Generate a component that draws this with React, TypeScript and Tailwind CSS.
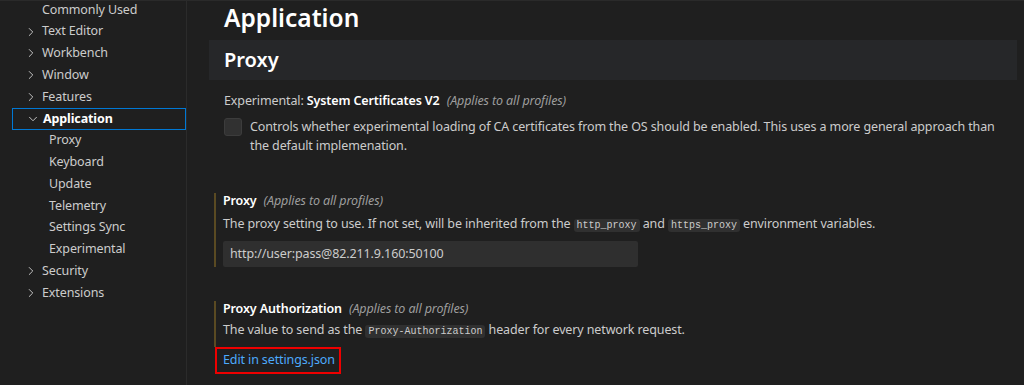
import React from "react";
import { ChevronRight, ChevronDown } from "lucide-react";

const font = { fontFamily: '"Noto Sans", "Segoe UI", sans-serif' };

type Item = { label: string; level: 0 | 1 | 2; chevron?: "right" | "down"; selected?: boolean };

const items: Item[] = [
  { label: "Commonly Used", level: 0 },
  { label: "Text Editor", level: 0, chevron: "right" },
  { label: "Workbench", level: 0, chevron: "right" },
  { label: "Window", level: 0, chevron: "right" },
  { label: "Features", level: 0, chevron: "right" },
  { label: "Application", level: 0, chevron: "down", selected: true },
  { label: "Proxy", level: 1 },
  { label: "Keyboard", level: 1 },
  { label: "Update", level: 1 },
  { label: "Telemetry", level: 1 },
  { label: "Settings Sync", level: 1 },
  { label: "Experimental", level: 1 },
  { label: "Security", level: 0, chevron: "right" },
  { label: "Extensions", level: 0, chevron: "right" },
];

function Code({ children }: { children: React.ReactNode }) {
  return (
    <code className="rounded-[3px] bg-[#303030] px-[3px] py-[1px] font-['Liberation_Mono',monospace] text-[10px] tracking-normal text-[#cccccc]">
      {children}
    </code>
  );
}

function Applies() {
  return <span className="ml-[7px] italic text-[#9d9d9d]">(Applies to all profiles)</span>;
}

export default function App() {
  return (
    <div
      className="flex h-[385px] w-[1024px] overflow-hidden border-t border-[#2a2a2a] bg-[#1f1f1f] text-[12.5px] tracking-[-0.12px] text-[#cccccc]"
      style={font}
    >
      {/* Sidebar */}
      <div className="-mt-[2px] flex w-[187px] shrink-0 flex-col border-r border-[#2b2b2b]">
        {items.map((it) => (
          <div
            key={it.label}
            className={
              "flex h-[21.8px] shrink-0 items-center " +
              (it.selected ? "ml-[12px] border border-[#0078d4] pl-[13px] font-bold text-white" : "")
            }
          >
            {it.selected ? (
              <>
                <ChevronDown size={14} strokeWidth={1.6} className="mr-[3px] text-[#cccccc]" />
                <span>{it.label}</span>
              </>
            ) : it.level === 1 ? (
              <span className="pl-[49px]">{it.label}</span>
            ) : it.chevron ? (
              <>
                <ChevronRight size={14} strokeWidth={1.6} className="ml-[24px] mr-[4px] text-[#cccccc]" />
                <span>{it.label}</span>
              </>
            ) : (
              <span className="pl-[42px]">{it.label}</span>
            )}
          </div>
        ))}
      </div>

      {/* Main */}
      <div className="flex min-w-0 flex-1 flex-col pl-[22px] pr-[7px]">
        <div className="-mt-[1px] flex h-[40px] shrink-0 items-center pb-[4px] pl-[15px] text-[24.5px] font-semibold tracking-normal text-white">
          Application
        </div>
        <div className="flex h-[40px] shrink-0 items-center bg-[#262729] pl-[15px] text-[20px] font-semibold tracking-normal text-white">
          Proxy
        </div>

        {/* Setting 1 */}
        <div className="mt-[11px] pl-[15px]">
          <div className="leading-[20px]">
            <span className="text-[#cccccc]">Experimental: </span>
            <span className="font-semibold text-white">System Certificates V2</span>
            <Applies />
          </div>
          <div className="mt-[6px] flex items-start">
            <div className="mt-[1px] h-[18px] w-[18px] shrink-0 rounded-[3px] border border-[#3c3c3c] bg-[#313131]" />
            <p className="ml-[8px] max-w-[760px] leading-[19px]">
              Controls whether experimental loading of CA certificates from the OS should be enabled. This uses a more general approach than the default implemenation.
            </p>
          </div>
        </div>

        {/* Setting 2 */}
        <div className="mt-[38px] ml-[5px] border-l-2 border-[#5a4a22] pl-[7px]">
          <div className="leading-[16px]">
            <span className="font-semibold text-white">Proxy</span>
            <Applies />
          </div>
          <div className="mt-[6px] leading-[18px]">
            The proxy setting to use. If not set, will be inherited from the <Code>http_proxy</Code> and <Code>https_proxy</Code> environment variables.
          </div>
          <div className="mt-[6px] flex h-[26px] w-[415px] items-center rounded-[2px] bg-[#2f2f2f] pl-[7px] text-[#cccccc]">
            http://user:pass@82.211.9.160:50100
          </div>
        </div>

        {/* Setting 3 */}
        <div className="mt-[34px] ml-[5px]">
          <div className="border-l-2 border-[#5a4a22] pb-[6px] pl-[7px]">
            <div className="leading-[16px]">
              <span className="font-semibold text-white">Proxy Authorization</span>
              <Applies />
            </div>
            <div className="mt-[4px] leading-[18px]">
              The value to send as the <Code>Proxy-Authorization</Code> header for every network request.
            </div>
          </div>
          <div className="ml-[1px] flex h-[27px] w-[126px] items-center whitespace-nowrap border-2 border-[#ee0000] pl-[6px] text-[#4daafc]">
            Edit in settings.json
          </div>
        </div>
      </div>
    </div>
  );
}
